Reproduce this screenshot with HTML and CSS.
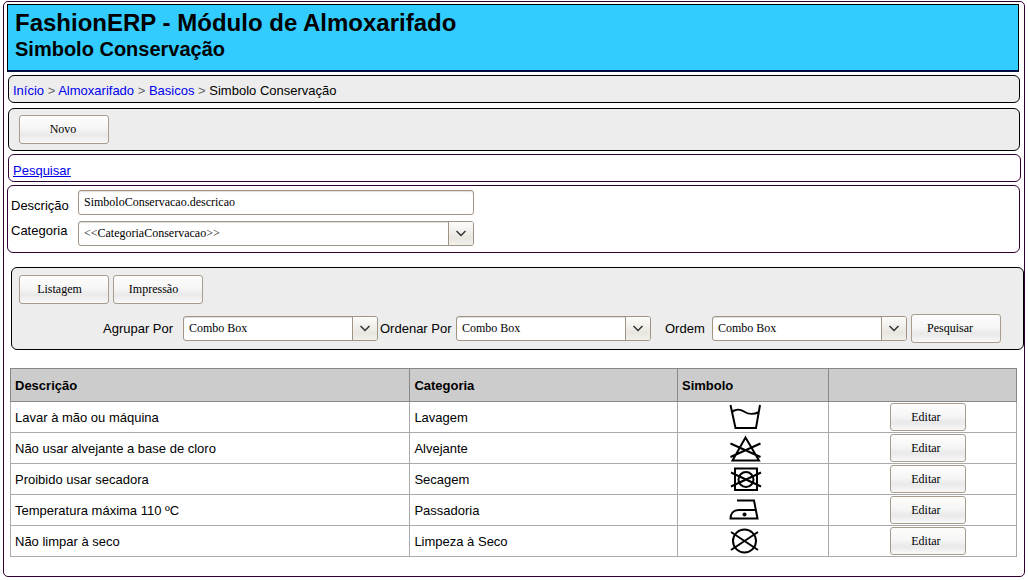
FILE: index.html
```html
<!DOCTYPE html>
<html lang="pt-BR">
<head>
<meta charset="utf-8">
<meta name="viewport" content="width=device-width, initial-scale=1">
<title>FashionERP - Módulo de Almoxarifado</title>
<link rel="stylesheet" href="styles.css">
</head>
<body>
<div class="frame">
  <header class="banner">
    <h1 class="banner-title">FashionERP - Módulo de Almoxarifado</h1>
    <h2 class="banner-subtitle">Simbolo Conservação</h2>
  </header>

  <nav class="panel breadcrumb" aria-label="Navegação">
    <a href="#">Início</a> <span class="sep">&gt;</span>
    <a href="#">Almoxarifado</a> <span class="sep">&gt;</span>
    <a href="#">Basicos</a> <span class="sep">&gt;</span>
    <span>Simbolo Conservação</span>
  </nav>

  <div class="panel toolbar">
    <button type="button" class="btn">Novo</button>
  </div>

  <div class="panel search-link"><a href="#busca">Pesquisar</a></div>

  <form class="panel search-form" id="busca">
    <label class="label-low" for="descricao">Descrição</label>
    <input class="field" id="descricao" type="text" value="SimboloConservacao.descricao">
    <label class="label-high" for="categoria">Categoria</label>
    <div class="combo">
      <select class="field" id="categoria"><option>&lt;&lt;CategoriaConservacao&gt;&gt;</option></select>
      <span class="combo-arrow"><svg viewBox="0 0 10 7"><path d="M.5 1l4.500 4.500L9.500 1"/></svg></span>
    </div>
  </form>

  <form class="panel filters">
    <div class="actions">
      <button type="button" class="btn">Listagem</button>
      <button type="button" class="btn">Impressão</button>
    </div>
    <div class="filter-row">
      <label class="filter-label" for="agrupar">Agrupar Por</label>
      <div class="combo">
        <select class="field" id="agrupar"><option>Combo Box</option></select>
        <span class="combo-arrow"><svg viewBox="0 0 10 7"><path d="M.5 1l4.500 4.500L9.500 1"/></svg></span>
      </div>
      <label class="filter-label" for="ordenar">Ordenar Por</label>
      <div class="combo">
        <select class="field" id="ordenar"><option>Combo Box</option></select>
        <span class="combo-arrow"><svg viewBox="0 0 10 7"><path d="M.5 1l4.500 4.500L9.500 1"/></svg></span>
      </div>
      <label class="filter-label" for="ordem">Ordem</label>
      <div class="combo">
        <select class="field" id="ordem"><option>Combo Box</option></select>
        <span class="combo-arrow"><svg viewBox="0 0 10 7"><path d="M.5 1l4.500 4.500L9.500 1"/></svg></span>
      </div>
      <button type="button" class="btn">Pesquisar</button>
    </div>
  </form>

  <table class="list">
    <colgroup><col class="col-desc"><col class="col-cat"><col class="col-symbol"><col class="col-edit"></colgroup>
    <thead>
      <tr><th>Descrição</th><th>Categoria</th><th>Simbolo</th><th></th></tr>
    </thead>
    <tbody>
      <tr>
        <td>Lavar à mão ou máquina</td><td>Lavagem</td>
        <td class="symbol"><svg viewBox="0 0 34 28"><path d="M2.500 2l5 23h20.500L32 2M3.500 9.500C7 6 12 6 16 8.500s8 4 15 .5"/></svg></td>
        <td class="edit"><button type="button" class="btn btn-small">Editar</button></td>
      </tr>
      <tr>
        <td>Não usar alvejante a base de cloro</td><td>Alvejante</td>
        <td class="symbol"><svg viewBox="0 0 34 28"><path d="M17.500 3.500L4.500 26.500H31zM2.500 9.500l30 13.500M32.500 9.500L2.500 23"/></svg></td>
        <td class="edit"><button type="button" class="btn btn-small">Editar</button></td>
      </tr>
      <tr>
        <td>Proibido usar secadora</td><td>Secagem</td>
        <td class="symbol"><svg viewBox="0 0 34 28"><path d="M7 3.500h22v21.500h-22zM3 7.500l30 14M33 7.500L3 21.500"/><circle cx="18" cy="14.500" r="7.500"/></svg></td>
        <td class="edit"><button type="button" class="btn btn-small">Editar</button></td>
      </tr>
      <tr>
        <td>Temperatura máxima 110 ºC</td><td>Passadoria</td>
        <td class="symbol"><svg viewBox="0 0 34 28"><path d="M9 4.500h17l3.500 18H2.500c0-5 3-8.500 8-8.500H28"/><circle class="dot" cx="16.500" cy="18.500" r="2"/></svg></td>
        <td class="edit"><button type="button" class="btn btn-small">Editar</button></td>
      </tr>
      <tr>
        <td>Não limpar à seco</td><td>Limpeza à Seco</td>
        <td class="symbol"><svg viewBox="0 0 34 28"><path d="M3 5l27 18M30 5L3 23"/><circle cx="16.500" cy="14" r="11.500"/></svg></td>
        <td class="edit"><button type="button" class="btn btn-small">Editar</button></td>
      </tr>
    </tbody>
  </table>
</div>
</body>
</html>
```
FILE: styles.css
```css
* { box-sizing: border-box; }

body {
  margin: 1px 3px 3px;
  background: #fff;
  color: #000;
  font: 13px/19px "Liberation Sans", Arial, sans-serif;
}

.frame {
  border: 1px solid #330033;
  border-radius: 5px;
  padding: 2px 0 19px;
}

.banner {
  margin: 0 5px 3px 3px;
  padding: 4px 7px 8px;
  border: 1px solid #000;
  border-bottom: 2px solid #001040;
  background: #33ccff;
}

.banner-title,
.banner-subtitle { margin: 0; font-weight: bold; }
.banner-title { font-size: 24px; line-height: 28px; }
.banner-subtitle { font-size: 20px; line-height: 25px; }

.panel {
  margin: 0 4px;
  border: 1px solid #330033;
  border-radius: 6px;
}

.breadcrumb,
.toolbar,
.filters { border-color: #000; background: #ededed; }

.breadcrumb { margin-bottom: 5px; padding: 5px 4px 2px; }
.breadcrumb a { color: #0000ee; text-decoration: none; }
.sep { color: #666; }

.toolbar { margin-bottom: 3px; padding: 6px 10px; }

.search-link { margin-right: 3px; margin-bottom: 3px; padding: 6px 4px 1px; }
.search-link a { color: #0000ee; }

.search-form {
  display: grid;
  grid-template-columns: 67px minmax(0, 396px);
  gap: 6px 0;
  margin: 0 4px 14px 3px;
  padding: 4px 3px 6px;
}
.label-low { align-self: end; }
.label-high { align-self: start; }

.field {
  display: block;
  width: 100%;
  height: 25px;
  margin: 0;
  padding: 0 5px 1px;
  border: 1px solid #a09484;
  border-radius: 3px;
  background: #fff;
  box-shadow: inset 0 1px 1px #ddd;
  color: #000;
  font: 12px "Liberation Serif", "Times New Roman", serif;
  appearance: none;
}
input.field { padding-bottom: 0; }

.combo { position: relative; min-width: 0; }
.combo-arrow {
  position: absolute;
  top: 1px;
  right: 1px;
  bottom: 1px;
  display: flex;
  align-items: center;
  justify-content: center;
  width: 25px;
  border-left: 1px solid #a09484;
  border-radius: 0 2px 2px 0;
  background: linear-gradient(#fcfcfb, #e9e6df 70%, #f3f1ec);
  pointer-events: none;
}
.combo-arrow svg { width: 10px; height: 7px; fill: none; stroke: #333; stroke-width: 1.5; }

.btn {
  flex: none;
  width: 90px;
  height: 29px;
  margin: 0;
  padding: 0 10px 0 8px;
  border: 1px solid #a89c8c;
  border-radius: 3px;
  background: linear-gradient(#fdfdfc, #f6f6f6 45%, #e9e9e9 70%, #f8f8f8);
  color: #000;
  font: 12px "Liberation Serif", "Times New Roman", serif;
}
.toolbar .btn { display: block; }
.btn-small { width: 76px; height: 28px; padding: 0 12px 0 7px; }

.filters { margin: 0 0 18px 7px; padding: 7px 7px 6px; }
.actions { display: flex; gap: 4px; margin-bottom: 10px; }
.actions .btn { padding-right: 17px; }
.filter-row { display: flex; align-items: center; padding-right: 14px; }
.filter-row .combo { flex: 0 1 195px; }
.filter-label { flex: 0 0 80px; }
.filter-label:first-child { flex-basis: 164px; padding-left: 84px; }
.filter-label[for="ordenar"] { flex-basis: 78px; padding-left: 2px; }
.filter-label[for="ordem"] { flex-basis: 61px; padding-left: 14px; }
.filter-row .btn { margin-left: 4px; padding-right: 20px; }

.list {
  width: calc(100% - 13px);
  margin-left: 6px;
  border-collapse: collapse;
  table-layout: fixed;
}
.col-desc { width: 39.7%; }
.col-cat { width: 26.6%; }
.col-symbol { width: 15%; }
.col-edit { width: 18.7%; }
.list th,
.list td { height: 31px; padding: 0 4px; border: 1px solid #aaa; text-align: left; }
.list th { height: 33px; border-color: #888; background: #ccc; font-weight: bold; }
.list .symbol { padding: 0 16px 0 0; }
.symbol svg {
  display: block;
  width: 34px;
  height: 28px;
  margin: 0 auto;
  fill: none;
  stroke: #000;
  stroke-width: 2;
}
.symbol .dot { fill: #000; stroke: none; }
.list .edit { padding: 0 0 0 12px; }
.edit .btn { display: block; margin: 0 auto; }
```
